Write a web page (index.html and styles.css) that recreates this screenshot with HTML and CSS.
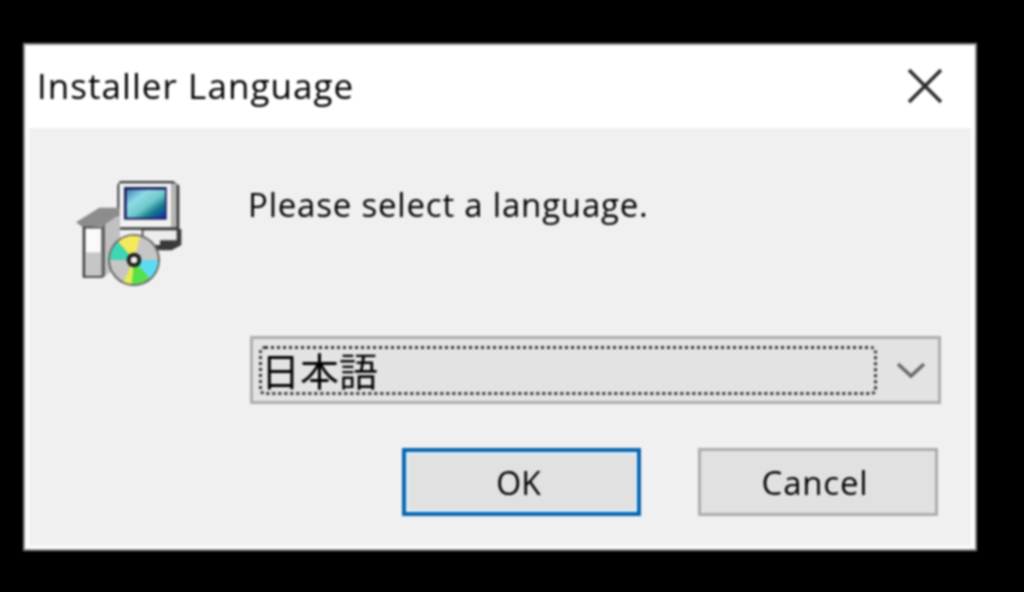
FILE: index.html
```html
<!DOCTYPE html>
<html lang="ja">

<head>
    <meta charset="UTF-8">
    <meta name="viewport" content="width=device-width, initial-scale=1.0">
    <title>Installer Language</title>
    <link rel="stylesheet" href="styles.css">
</head>

<body>
    <div class="dialog">
        <div class="title-bar">
            <span class="title-text">Installer Language</span>
            <svg class="close-icon" viewBox="0 0 36 36" aria-hidden="true">
                <path d="M2 2 L34 34 M34 2 L2 34" />
            </svg>
        </div>
        <div class="dialog-body">
            <svg class="app-icon" viewBox="0 0 420 405" aria-hidden="true">
                <defs>
                    <linearGradient id="screenGrad" x1="0" y1="0" x2="1" y2="1">
                        <stop offset="0" stop-color="#3f7fb0" />
                        <stop offset="0.3" stop-color="#8fdbe6" />
                        <stop offset="0.55" stop-color="#6fc9c9" />
                        <stop offset="0.75" stop-color="#157a8c" />
                        <stop offset="1" stop-color="#0a2fa8" />
                    </linearGradient>
                    <pattern id="dither" width="10" height="10" patternUnits="userSpaceOnUse">
                        <rect width="10" height="10" fill="#f2f2f2" />
                        <rect width="5" height="5" fill="#9a9a9a" />
                        <rect x="5" y="5" width="5" height="5" fill="#9a9a9a" />
                    </pattern>
                </defs>
                <!-- monitor base -->
                <path d="M245 192 H364 V240 L335 256 H245 Z" fill="#3a3a3a" />
                <path d="M250 196 H350 V226 H300 V240 H250 Z" fill="#ececec" />
                <!-- monitor -->
                <path d="M180 48 H340 L358 62 V194 H172 V60 Z" fill="#3a3a3a" />
                <path d="M178 55 H335 V187 H178 Z" fill="#f2f2f2" />
                <path d="M335 55 H350 V187 H335 Z" fill="#b4b4b4" />
                <rect x="192" y="66" width="128" height="98" fill="#1c1c60" />
                <rect x="200" y="74" width="115" height="84" fill="url(#screenGrad)" />
                <!-- box -->
                <path d="M48 172 L118 128 L178 128 L178 150 L130 182 L70 188 Z" fill="#8c8c8c" />
                <path d="M68 185 H128 V338 H68 Z" fill="#3a3a3a" />
                <path d="M76 190 H124 V332 H76 Z" fill="#fafafa" />
                <path d="M76 262 H124 V332 H76 Z" fill="url(#dither)" />
                <path d="M128 182 L180 150 V300 L128 338 Z" fill="#c0c0c0" />
                <path d="M128 182 L134 178 V334 L128 338 Z" fill="#4a4a4a" />
                <!-- disc -->
                <circle cx="222" cy="285" r="78" fill="#666666" />
                <circle cx="222" cy="285" r="72" fill="url(#dither)" />
                <path d="M222 285 L175 230 A72 72 0 0 0 150 285 Z" fill="#3fd6b4" />
                <path d="M222 285 L175 230 A72 72 0 0 1 240 215 Z" fill="#f5ea5a" />
                <path d="M222 285 L294 285 A72 72 0 0 1 268 340 Z" fill="#5cdcf2" />
                <path d="M222 285 L268 340 A72 72 0 0 1 215 357 Z" fill="#55e04a" />
                <path d="M222 285 L215 357 A72 72 0 0 1 190 350 Z" fill="#e6ee50" />
                <circle cx="222" cy="285" r="22" fill="#222222" />
                <circle cx="222" cy="285" r="10" fill="#f0f0f0" />
            </svg>
            <div class="main-col">
                <p class="prompt">Please select a language.</p>
                <div class="combo">
                    <div class="combo-focus">日本語</div>
                    <svg class="combo-arrow" viewBox="0 0 30 18" aria-hidden="true">
                        <path d="M2 3 L15 15 L28 3" />
                    </svg>
                </div>
                <div class="button-row">
                    <div class="btn btn-default">OK</div>
                    <div class="btn btn-cancel">Cancel</div>
                </div>
            </div>
        </div>
    </div>
</body>

</html>
```

FILE: styles.css
```css
* {
    box-sizing: border-box;
    margin: 0;
    padding: 0;
}

body {
    width: 1024px;
    height: 592px;
    overflow: hidden;
    background-color: #000000;
    padding: 43px 47px 41px 23px;
    font-family: "Open Sans", "Noto Sans", "Noto Sans CJK JP", sans-serif;
    color: #000000;
}

.dialog {
    width: 954px;
    height: 508px;
    display: flex;
    flex-direction: column;
    border: 2px solid #8a8a8a;
    padding: 0 4px 3px;
    background-color: #ffffff;
    filter: blur(0.8px);
}

/*TITLE BAR*/
.title-bar {
    height: 83px;
    flex-shrink: 0;
    display: flex;
    align-items: center;
    justify-content: space-between;
    padding: 0 28px 2px 8px;
}

.title-text {
    font-size: 35px;
    letter-spacing: 1.05px;
}

.close-icon {
    width: 36px;
    height: 36px;
    fill: none;
    stroke: #2b2b2b;
    stroke-width: 3.5;
}

/*BODY*/
.dialog-body {
    flex: 1;
    display: flex;
    gap: 48px;
    padding: 37px 30px 0 31px;
    background-color: #f0f0f0;
}

.app-icon {
    width: 140px;
    height: 135px;
    flex-shrink: 0;
}

.main-col {
    flex: 1;
    display: flex;
    flex-direction: column;
}

.prompt {
    font-size: 33px;
    letter-spacing: 0.8px;
    line-height: 46px;
    height: 171px;
    padding-top: 17px;
}

.combo {
    height: 68px;
    margin-left: 2px;
    display: flex;
    align-items: center;
    justify-content: space-between;
    padding: 0 12px 0 6px;
    border: 3px solid #adadad;
    background-color: #e3e3e3;
}

.combo-focus {
    width: 618px;
    height: 49px;
    display: flex;
    align-items: center;
    padding-bottom: 2px;
    border: 3px dotted #333333;
    border-radius: 6px;
    font-family: "Noto Sans CJK JP", sans-serif;
    font-size: 39px;
    text-indent: -1px;
    color: #000000;
}

.combo-arrow {
    width: 30px;
    height: 18px;
    fill: none;
    stroke: #6a6a6a;
    stroke-width: 3.5;
}

/*BUTTONS*/
.button-row {
    display: flex;
    justify-content: flex-end;
    gap: 57px;
    margin-top: 44px;
    margin-right: 3px;
}

.btn {
    width: 240px;
    height: 68px;
    display: flex;
    align-items: center;
    justify-content: center;
    padding-right: 6px;
    border: 3px solid #adadad;
    background-color: #e1e1e1;
    font-size: 33px;
}

.btn-default {
    width: 239px;
    font-size: 32px;
    border: 4px solid #0b66b0;
    box-shadow: inset 0 0 0 2px #d9f1fb;
}

.btn-cancel {
    letter-spacing: 0.8px;
}
```
